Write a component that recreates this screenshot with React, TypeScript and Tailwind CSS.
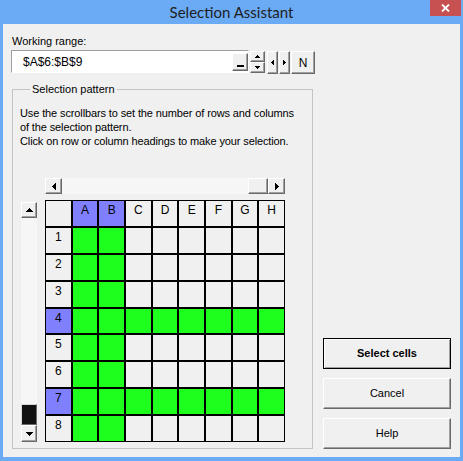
import type { ReactNode } from "react";

type Dir = "up" | "down" | "left" | "right";

const raised =
	"bg-[#f0f0f0] border border-t-white border-l-white border-r-[#696969] border-b-[#696969] shadow-[inset_-1px_-1px_0_#a0a0a0]";

const COLS = ["A", "B", "C", "D", "E", "F", "G", "H"];
const SEL_COLS = ["A", "B"];
const SEL_ROWS = [4, 7];

const Arrow = ({ dir, size = 7 }: { dir: Dir; size?: number }) => {
	const h = Math.ceil(size / 2);
	const vertical = dir === "up" || dir === "down";
	const w = vertical ? size : h;
	const ht = vertical ? h : size;
	const pts = {
		up: `0,${h} ${size},${h} ${size / 2},0`,
		down: `0,0 ${size},0 ${size / 2},${h}`,
		left: `${h},0 ${h},${size} 0,${size / 2}`,
		right: `0,0 0,${size} ${h},${size / 2}`,
	}[dir];
	return (
		<svg width={w} height={ht} viewBox={`0 0 ${w} ${ht}`} shapeRendering="crispEdges">
			<polygon points={pts} fill="#000" />
		</svg>
	);
};

const ArrowButton = ({ dir, className, size }: { dir: Dir; className: string; size?: number }) => (
	<div className={`${raised} ${className} flex shrink-0 items-center justify-center`}>
		<Arrow dir={dir} size={size} />
	</div>
);

function HScrollBar() {
	return (
		<div className="flex h-[16px] w-[240px]">
			<ArrowButton dir="left" className="w-[17px]" />
			<div className="flex flex-1 justify-end bg-[#f6f6f6]">
				<div className={`${raised} w-[20px]`} />
			</div>
			<ArrowButton dir="right" className="w-[17px]" />
		</div>
	);
}

function VScrollBar() {
	return (
		<div className="mt-[2px] flex h-[240px] w-[16px] flex-col">
			<ArrowButton dir="up" className="h-[16px]" />
			<div className="flex flex-1 flex-col justify-end bg-[#f6f6f6]">
				<div className="h-[21px] border border-t-[#d8d8d8] border-l-[#d8d8d8] border-r-[#696969] border-b-[#696969] bg-[#111]" />
			</div>
			<ArrowButton dir="down" className="h-[17px]" />
		</div>
	);
}

function PatternGrid() {
	const cells: ReactNode[] = [<div key="corner" className="bg-[#f0f0f0]" />];
	for (const c of COLS) {
		cells.push(
			<div
				key={c}
				className={`${SEL_COLS.includes(c) ? "bg-[#8080ff]" : "bg-[#f0f0f0]"} pt-[2px] text-center`}
			>
				{c}
			</div>,
		);
	}
	for (let r = 1; r <= 8; r++) {
		const rowSel = SEL_ROWS.includes(r);
		cells.push(
			<div key={`h${r}`} className={`${rowSel ? "bg-[#8080ff]" : "bg-[#f0f0f0]"} pt-[2px] text-center`}>
				{r}
			</div>,
		);
		for (const c of COLS) {
			const on = rowSel || SEL_COLS.includes(c);
			cells.push(<div key={`${c}${r}`} className={on ? "bg-[#1eff1e]" : "bg-[#f0f0f0]"} />);
		}
	}
	return (
		<div className="grid h-[242px] w-[240px] grid-cols-9 grid-rows-9 gap-[2px] bg-black p-[1px] text-[12px] leading-[14px]">
			{cells}
		</div>
	);
}

const DialogButton = ({ children, isDefault }: { children: ReactNode; isDefault?: boolean }) => (
	<div
		className={`flex h-[31px] w-[128px] items-center justify-center ${
			isDefault
				? "border border-black bg-[#f0f0f0] font-bold shadow-[inset_1px_1px_0_white,inset_-1px_-1px_0_#a0a0a0]"
				: raised
		}`}
	>
		{children}
	</div>
);

export default function App() {
	return (
		<div className="h-[461px] w-[463px] bg-[#6babf5] font-['Liberation_Sans',Tahoma,sans-serif] text-[11px] text-black">
			<div className="relative flex h-[24px] items-center justify-center">
				<span className="font-['Lato',sans-serif] text-[15px] text-[#1e1e1e]">Selection Assistant</span>
				<div className="absolute right-[2px] top-0 flex h-[16px] w-[31px] items-center justify-center bg-[#c75050]">
					<svg width="9" height="8" viewBox="0 0 9 8">
						<path d="M1 0.5 L8 7.5 M8 0.5 L1 7.5" stroke="white" strokeWidth="1.8" />
					</svg>
				</div>
			</div>

			<div className="mx-[3px] flex h-[433px] gap-[10px] bg-[#f0f0f0] pb-[8px] pl-[9px] pr-[9px] pt-[10px]">
				<div className="flex w-[301px] shrink-0 flex-col">
					<div className="leading-[14px]">Working range:</div>
					<div className="mt-[2px] flex items-start">
						<div className="relative flex h-[23px] w-[238px] shrink-0 items-center border border-t-[#a0a0a0] border-l-[#a0a0a0] border-r-white border-b-white bg-white pl-[11px] text-[12px] -ml-[1px]">
							$A$6:$B$9
							<div className={`${raised} absolute right-[0px] top-[2px] flex h-[18px] w-[16px] items-end justify-center pb-[3px]`}>
								<div className="h-[2px] w-[7px] bg-black" />
							</div>
						</div>
						<div className="ml-[1px] mt-[1px] flex w-[15px] shrink-0 flex-col">
							<ArrowButton dir="up" size={5} className="h-[11px]" />
							<ArrowButton dir="down" size={5} className="h-[11px]" />
						</div>
						<ArrowButton dir="left" size={5} className="ml-[2px] mt-[1px] h-[23px] w-[11px]" />
						<ArrowButton dir="right" size={5} className="ml-[1px] mt-[1px] h-[23px] w-[11px]" />
						<div className={`${raised} ml-[1px] mt-[1px] flex h-[23px] w-[24px] shrink-0 items-center justify-center text-[12px]`}>
							N
						</div>
					</div>

					<fieldset className="mt-[8px] flex-1 border border-[#c4c4c4] px-[7px]">
						<legend className="ml-[10px] px-[2px] leading-[14px]">Selection pattern</legend>
						<p className="mt-[10px] leading-[14px] tracking-[-0.12px]">
							Use the scrollbars to set the number of rows and columns
							<br />
							of the selection pattern.
							<br />
							Click on row or column headings to make your selection.
						</p>
						<div className="ml-[1px] mt-[30px] grid grid-cols-[16px_240px] gap-x-[8px] gap-y-[6px]">
							<div />
							<HScrollBar />
							<VScrollBar />
							<PatternGrid />
						</div>
					</fieldset>
				</div>

				<div className="flex w-[128px] flex-col justify-end gap-[9px]">
					<DialogButton isDefault>Select cells</DialogButton>
					<DialogButton>Cancel</DialogButton>
					<DialogButton>Help</DialogButton>
				</div>
			</div>
		</div>
	);
}
